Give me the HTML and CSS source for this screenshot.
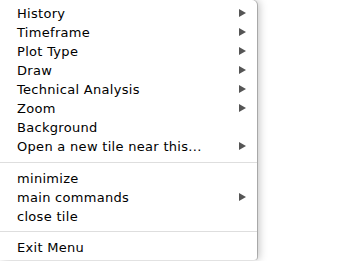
FILE: index.html
```html
<html>

<head>
    <link rel="stylesheet" href="styles.css">
</head>

<body>

    <div class="menu">
        <ul class="group">
            <li class="item sub">History</li>
            <li class="item sub">Timeframe</li>
            <li class="item sub">Plot Type</li>
            <li class="item sub">Draw</li>
            <li class="item sub">Technical Analysis</li>
            <li class="item sub">Zoom</li>
            <li class="item">Background</li>
            <li class="item sub">Open a new tile near this...</li>
        </ul>
        <ul class="group">
            <li class="item">minimize</li>
            <li class="item sub">main commands</li>
            <li class="item">close tile</li>
        </ul>
        <ul class="group last">
            <li class="item">Exit Menu</li>
        </ul>
    </div>

</body>

</html>
```

FILE: styles.css
```css
body {
    margin: 0;
    background-color: #fff;
    font-family: "DejaVu Sans", sans-serif;
}

.menu {
    width: 257px;
    height: 260px;
    background-color: #fff;
    border-top-right-radius: 5px;
    border-bottom-right-radius: 3px;
    box-shadow: 2px 0 9px rgba(0, 0, 0, 0.25), 1px 0 0 #c8c8c8;
    padding-top: 4px;
    box-sizing: border-box;
}

.group {
    list-style: none;
    margin: 0;
    padding: 0;
}

/* separator lines between groups */
.group + .group {
    border-top: 1px solid #dedede;
    margin-top: 6px;
    padding-top: 6px;
}

.group.last {
    margin-top: 5px;
}

.item {
    position: relative;
    height: 19px;
    line-height: 19px;
    padding-left: 17px;
    font-size: 13px;
    letter-spacing: 0.3px;
    color: #000;
}

.item.sub::after {
    content: "";
    position: absolute;
    left: 239px;
    top: 5px;
    border-left: 7px solid #555;
    border-top: 4.5px solid transparent;
    border-bottom: 4.5px solid transparent;
}
```
